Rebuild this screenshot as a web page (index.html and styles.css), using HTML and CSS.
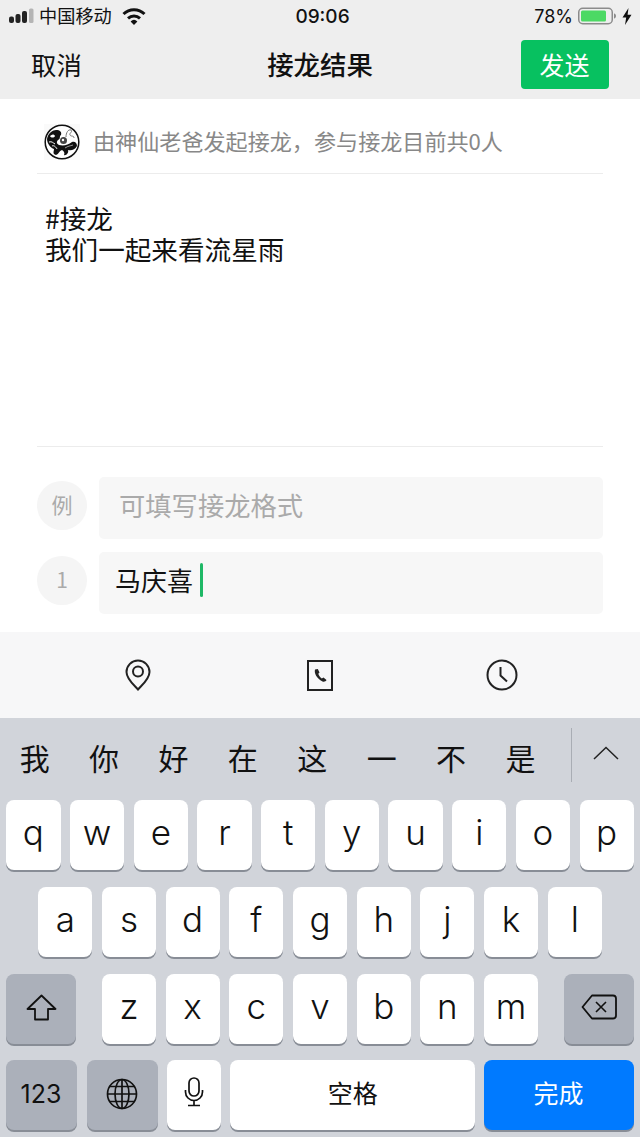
FILE: index.html
```html
<!DOCTYPE html>
<html lang="zh">

<head>
  <meta charset="UTF-8">
  <meta name="viewport" content="width=device-width, initial-scale=1.0">
  <title>接龙结果</title>
  <link rel="stylesheet" href="styles.css">
</head>

<body>
  <div id="top">
    <div class="status">
      <div class="status-left">
        <svg class="signal" width="26" height="16" viewBox="0 0 26 16">
          <rect x="0" y="8.500" width="5" height="6.500" rx="2" fill="#222" />
          <rect x="6.500" y="6" width="5" height="9" rx="2" fill="#222" />
          <rect x="13" y="3" width="5" height="12" rx="2" fill="#222" />
          <rect x="20" y="0.500" width="4.500" height="14.500" rx="1.500" fill="#b4b4b4" />
        </svg>
        <span class="carrier">中国移动</span>
        <svg class="wifi" width="24" height="17" viewBox="0 0 24 17">
          <path d="M1.500 6A15 15 0 0 1 22.500 6" fill="none" stroke="#111" stroke-width="3" />
          <path d="M6 10.400A9 9 0 0 1 18 10.400" fill="none" stroke="#111" stroke-width="3" />
          <path d="M8.600 13.400A5 5 0 0 1 15.400 13.400L12 17Z" fill="#111" />
        </svg>
      </div>
      <span class="time">09:06</span>
      <div class="status-right">
        <span class="percent">78%</span>
        <svg width="39" height="18" viewBox="0 0 39 18">
          <rect x="0.750" y="1.250" width="33.500" height="15.500" rx="4" fill="none" stroke="#8b8b8b" stroke-width="1.500" />
          <rect x="3" y="3.500" width="25" height="11" rx="1.500" fill="#4cd964" />
          <path d="M36 6.500c1.500 .3 2 1.300 2 2.500s-.5 2.200-2 2.500Z" fill="#8b8b8b" />
        </svg>
        <svg class="bolt" width="10" height="17" viewBox="0 0 10 17">
          <path d="M6.500 0L0.500 9.500H4.200L3 17L9.500 6.800H5.600Z" fill="#111" />
        </svg>
      </div>
    </div>
    <div class="nav">
      <span class="cancel">取消</span>
      <span class="title">接龙结果</span>
      <button class="send">发送</button>
    </div>
  </div>

  <div id="content">
    <div class="info">
      <svg class="avatar" width="36" height="36" viewBox="0 0 36 36">
        <rect width="36" height="36" fill="#fafafa" />
        <circle cx="18" cy="18" r="16.800" fill="#fff" stroke="#111" stroke-width="1.500" />
        <path d="M3 15C4 9 9 6 12 6C16 6 18 8 17 11C15 12 17 15 14 16C12 18 13 20 15 21C20 22 24 21 28 18C31 17 33 19 33 22C31 26 27 27 24 26C25 29 22 32 20 31C21 29 20 27 18 26C15 27 15 30 12 31C8 30 10 27 10 25C7 24 3 20 3 15Z" fill="#111" />
        <path d="M6 12C8 10 10 10 11 12C10 14 7 14 6 12Z" fill="#fff" />
        <path d="M5 18C8 17 9 19 11 20M8 22C10 21 12 23 13 25" fill="none" stroke="#fff" stroke-width="1" />
        <path d="M21 24C24 22 26 22 29 21" fill="none" stroke="#999" stroke-width="1" />
        <circle cx="19.500" cy="16.500" r="3.500" fill="#444" />
        <circle cx="19" cy="16" r="1.200" fill="#fff" />
        <path d="M22 13C22 9 24 5 27 6C29 8 25 9 26 11C27 13 30 11 30 14" fill="none" stroke="#777" stroke-width="1" />
      </svg>
      <span>由神仙老爸发起接龙，参与接龙目前共0人</span>
    </div>
    <div class="topic">#接龙<br>我们一起来看流星雨</div>
    <div class="entries">
      <div class="entry">
        <span class="num">例</span>
        <div class="field hint">可填写接龙格式</div>
      </div>
      <div class="entry">
        <span class="num">1</span>
        <div class="field typed">马庆喜<i class="caret"></i></div>
      </div>
    </div>
  </div>

  <div id="tools">
    <svg width="26" height="32" viewBox="0 0 26 32">
      <path d="M13 30.500C8.500 25.500 1.500 20 1.500 13A11.500 11.500 0 0 1 24.500 13C24.500 20 17.500 25.500 13 30.500Z" fill="none" stroke="#222" stroke-width="2" />
      <circle cx="13" cy="12.500" r="5" fill="none" stroke="#222" stroke-width="2" />
    </svg>
    <svg width="26" height="31" viewBox="0 0 26 31">
      <rect x="1" y="1" width="24" height="29" fill="none" stroke="#222" stroke-width="2" />
      <path d="M8 9.500C7 13 9.500 18.500 15.500 21.500C17 22 19 21.500 19.500 20L16.500 17.500L14.800 18.500C13 17.500 11.800 15.500 11.300 13.800L12.500 12.500L10.800 9Z" fill="#222" />
    </svg>
    <svg width="32" height="32" viewBox="0 0 32 32">
      <circle cx="16" cy="16" r="14.500" fill="none" stroke="#222" stroke-width="2" />
      <path d="M14.500 8V16.500L21 22.500" fill="none" stroke="#222" stroke-width="2" />
    </svg>
  </div>

  <div id="keyboard">
    <div class="candidates">
      <div class="words">
        <span>我</span><span>你</span><span>好</span><span>在</span><span>这</span><span>一</span><span>不</span><span>是</span>
      </div>
      <div class="more">
        <svg width="26" height="14" viewBox="0 0 26 14">
          <path d="M1 13L13 1.500L25 13" fill="none" stroke="#222" stroke-width="1.500" />
        </svg>
      </div>
    </div>
    <div class="keys">
      <div class="row">
        <span class="key">q</span><span class="key">w</span><span class="key">e</span><span class="key">r</span><span class="key">t</span><span class="key">y</span><span class="key">u</span><span class="key">i</span><span class="key">o</span><span class="key">p</span>
      </div>
      <div class="row">
        <span class="key">a</span><span class="key">s</span><span class="key">d</span><span class="key">f</span><span class="key">g</span><span class="key">h</span><span class="key">j</span><span class="key">k</span><span class="key">l</span>
      </div>
      <div class="row row-split">
        <span class="key key-fn key-side">
          <svg width="31" height="27" viewBox="0 0 31 27">
            <path d="M15.500 1.500L29.500 15H22V25.500H9V15H1.500Z" fill="none" stroke="#111" stroke-width="1.800" stroke-linejoin="round" />
          </svg>
        </span>
        <div class="row">
          <span class="key">z</span><span class="key">x</span><span class="key">c</span><span class="key">v</span><span class="key">b</span><span class="key">n</span><span class="key">m</span>
        </div>
        <span class="key key-fn key-side">
          <svg width="36" height="26" viewBox="0 0 36 26">
            <path d="M11 1.500H32A3 3 0 0 1 35 4.500V21.500A3 3 0 0 1 32 24.500H11L1.500 13Z" fill="none" stroke="#111" stroke-width="1.800" stroke-linejoin="round" />
            <path d="M15 8L25 18M25 8L15 18" fill="none" stroke="#111" stroke-width="1.600" />
          </svg>
        </span>
      </div>
      <div class="row row-bottom">
        <span class="key key-fn key-small key-num">123</span>
        <span class="key key-fn key-small">
          <svg width="32" height="32" viewBox="0 0 32 32" fill="none" stroke="#111" stroke-width="1.700">
            <circle cx="16" cy="16" r="14.500" />
            <ellipse cx="16" cy="16" rx="7" ry="14.500" />
            <path d="M16 1.500V30.500M1.500 16H30.500M3.500 8.500H28.500M3.500 23.500H28.500" />
          </svg>
        </span>
        <span class="key">
          <svg width="20" height="30" viewBox="0 0 20 30" fill="none" stroke="#111" stroke-width="1.700">
            <rect x="5" y="1" width="10" height="18" rx="5" />
            <path d="M1.500 13V15A8.500 8.500 0 0 0 18.500 15V13M10 23.500V28.500M4 28.500H16" />
          </svg>
        </span>
        <span class="key key-space">空格</span>
        <span class="key key-done">完成</span>
      </div>
    </div>
  </div>
</body>

</html>
```

FILE: styles.css
```css
* {
  box-sizing: border-box;
}

body {
  margin: 0;
  width: 640px;
  height: 1137px;
  overflow: hidden;
  background: #fff;
  color: #111;
  font-family: "Noto Sans CJK SC", "Liberation Sans", sans-serif;
}

svg {
  display: block;
}

/* status bar and title */
#top {
  height: 99px;
  background: #eee;
}

.status {
  height: 34px;
  padding: 0 8px 2px 9px;
  display: grid;
  grid-template-columns: 1fr auto 1fr;
  align-items: center;
}

.status-left,
.status-right {
  display: flex;
  align-items: center;
}

.status-right {
  justify-content: flex-end;
}

.carrier {
  margin-left: 4px;
  padding-bottom: 2px;
  font-size: 18.200px;
  line-height: 24px;
}

.wifi {
  margin-left: 10px;
}

.time {
  margin-left: 4px;
  font-family: "Inter", "Liberation Sans", sans-serif;
  font-size: 19px;
  font-weight: 500;
}

.percent {
  margin-right: 5px;
  font-family: "Inter", "Liberation Sans", sans-serif;
  font-size: 18px;
}

.bolt {
  margin-left: 5px;
}

.nav {
  height: 65px;
  padding: 0 31px 4px 31px;
  position: relative;
  display: flex;
  align-items: center;
  justify-content: space-between;
}

.cancel {
  padding-bottom: 2px;
  font-size: 25.400px;
}

.title {
  position: absolute;
  left: 0;
  right: 0;
  padding-bottom: 2px;
  text-align: center;
  font-size: 26.400px;
  font-weight: 500;
  pointer-events: none;
}

.send {
  width: 88px;
  height: 49px;
  padding: 0 1px 2px 0;
  border: 0;
  border-radius: 4px;
  background: #07c160;
  color: #fff;
  font-family: inherit;
  font-size: 25px;
}

/* content */
#content {
  height: 533px;
  padding: 0 37px;
}

.info {
  height: 75px;
  padding-top: 8px;
  display: flex;
  align-items: center;
  border-bottom: 1px solid #ececec;
  color: #888;
  font-size: 22.100px;
}

.avatar {
  margin: 4px 13px 0 7px;
}

.topic {
  height: 273px;
  padding: 28px 0 0 8px;
  border-bottom: 1px solid #ececec;
  font-size: 26.600px;
  line-height: 31px;
}

.entries {
  padding-top: 30px;
  display: flex;
  flex-direction: column;
  gap: 13px;
}

.entry {
  display: flex;
  align-items: center;
  gap: 12px;
}

.num {
  width: 50px;
  height: 49px;
  margin-top: -6px;
  padding-bottom: 2px;
  border-radius: 50%;
  background: #f5f5f5;
  color: #aaa;
  font-size: 21px;
  display: flex;
  align-items: center;
  justify-content: center;
  flex-shrink: 0;
}

.field {
  flex: 1;
  height: 62px;
  padding-bottom: 7px;
  border-radius: 5px;
  background: #f7f7f7;
  display: flex;
  align-items: center;
  font-size: 26px;
}

.hint {
  padding-left: 20px;
  color: #aaa;
  font-size: 26.300px;
}

.typed {
  padding-left: 16px;
  color: #111;
}

.caret {
  width: 3px;
  height: 34px;
  margin-left: 7px;
  border-radius: 2px;
  background: #1fb866;
}

/* shortcut icons */
#tools {
  height: 86px;
  background: #f7f7f8;
  display: grid;
  grid-template-columns: repeat(3, 182px);
  justify-content: center;
  justify-items: center;
  align-items: center;
}

/* keyboard */
#keyboard {
  height: 419px;
  background: #d1d4da;
}

.candidates {
  height: 82px;
  display: flex;
}

.words {
  width: 571px;
  padding: 0 0 4px 0;
  display: grid;
  grid-template-columns: repeat(8, 69.400px);
  align-items: center;
  justify-items: center;
  font-size: 30px;
}

.more {
  flex: 1;
  height: 54px;
  margin-top: 10px;
  padding-bottom: 4px;
  border-left: 1px solid #a9adb4;
  display: flex;
  align-items: center;
  justify-content: center;
}

.keys {
  display: flex;
  flex-direction: column;
  gap: 16.800px;
}

.row {
  display: flex;
  justify-content: center;
  gap: 9.500px;
}

.row-split {
  padding: 0 6px;
  justify-content: space-between;
}

.row-bottom {
  padding: 0 6px;
  gap: 9.250px;
}

.key {
  width: 54.200px;
  height: 70px;
  padding-bottom: 6px;
  border-radius: 8px;
  background: #fff;
  box-shadow: 0 2px 0 #888d96;
  font-family: "Inter", "Liberation Sans", sans-serif;
  font-size: 35px;
  font-weight: 300;
  display: flex;
  align-items: center;
  justify-content: center;
  flex-shrink: 0;
}

.key-fn {
  background: #abb0ba;
}

.key-side {
  width: 70px;
  padding-bottom: 3px;
}

.key-small {
  width: 71px;
  padding-bottom: 3px;
}

.key-num {
  margin-right: 0.750px;
  font-size: 25px;
  font-weight: 400;
}

.key-space,
.key-done {
  padding-bottom: 7px;
  font-family: "Noto Sans CJK SC", sans-serif;
  font-size: 25px;
  font-weight: 400;
}

.key-space {
  width: 245px;
}

.key-done {
  width: 150px;
  padding-right: 2px;
  background: #007aff;
  color: #fff;
}
```
